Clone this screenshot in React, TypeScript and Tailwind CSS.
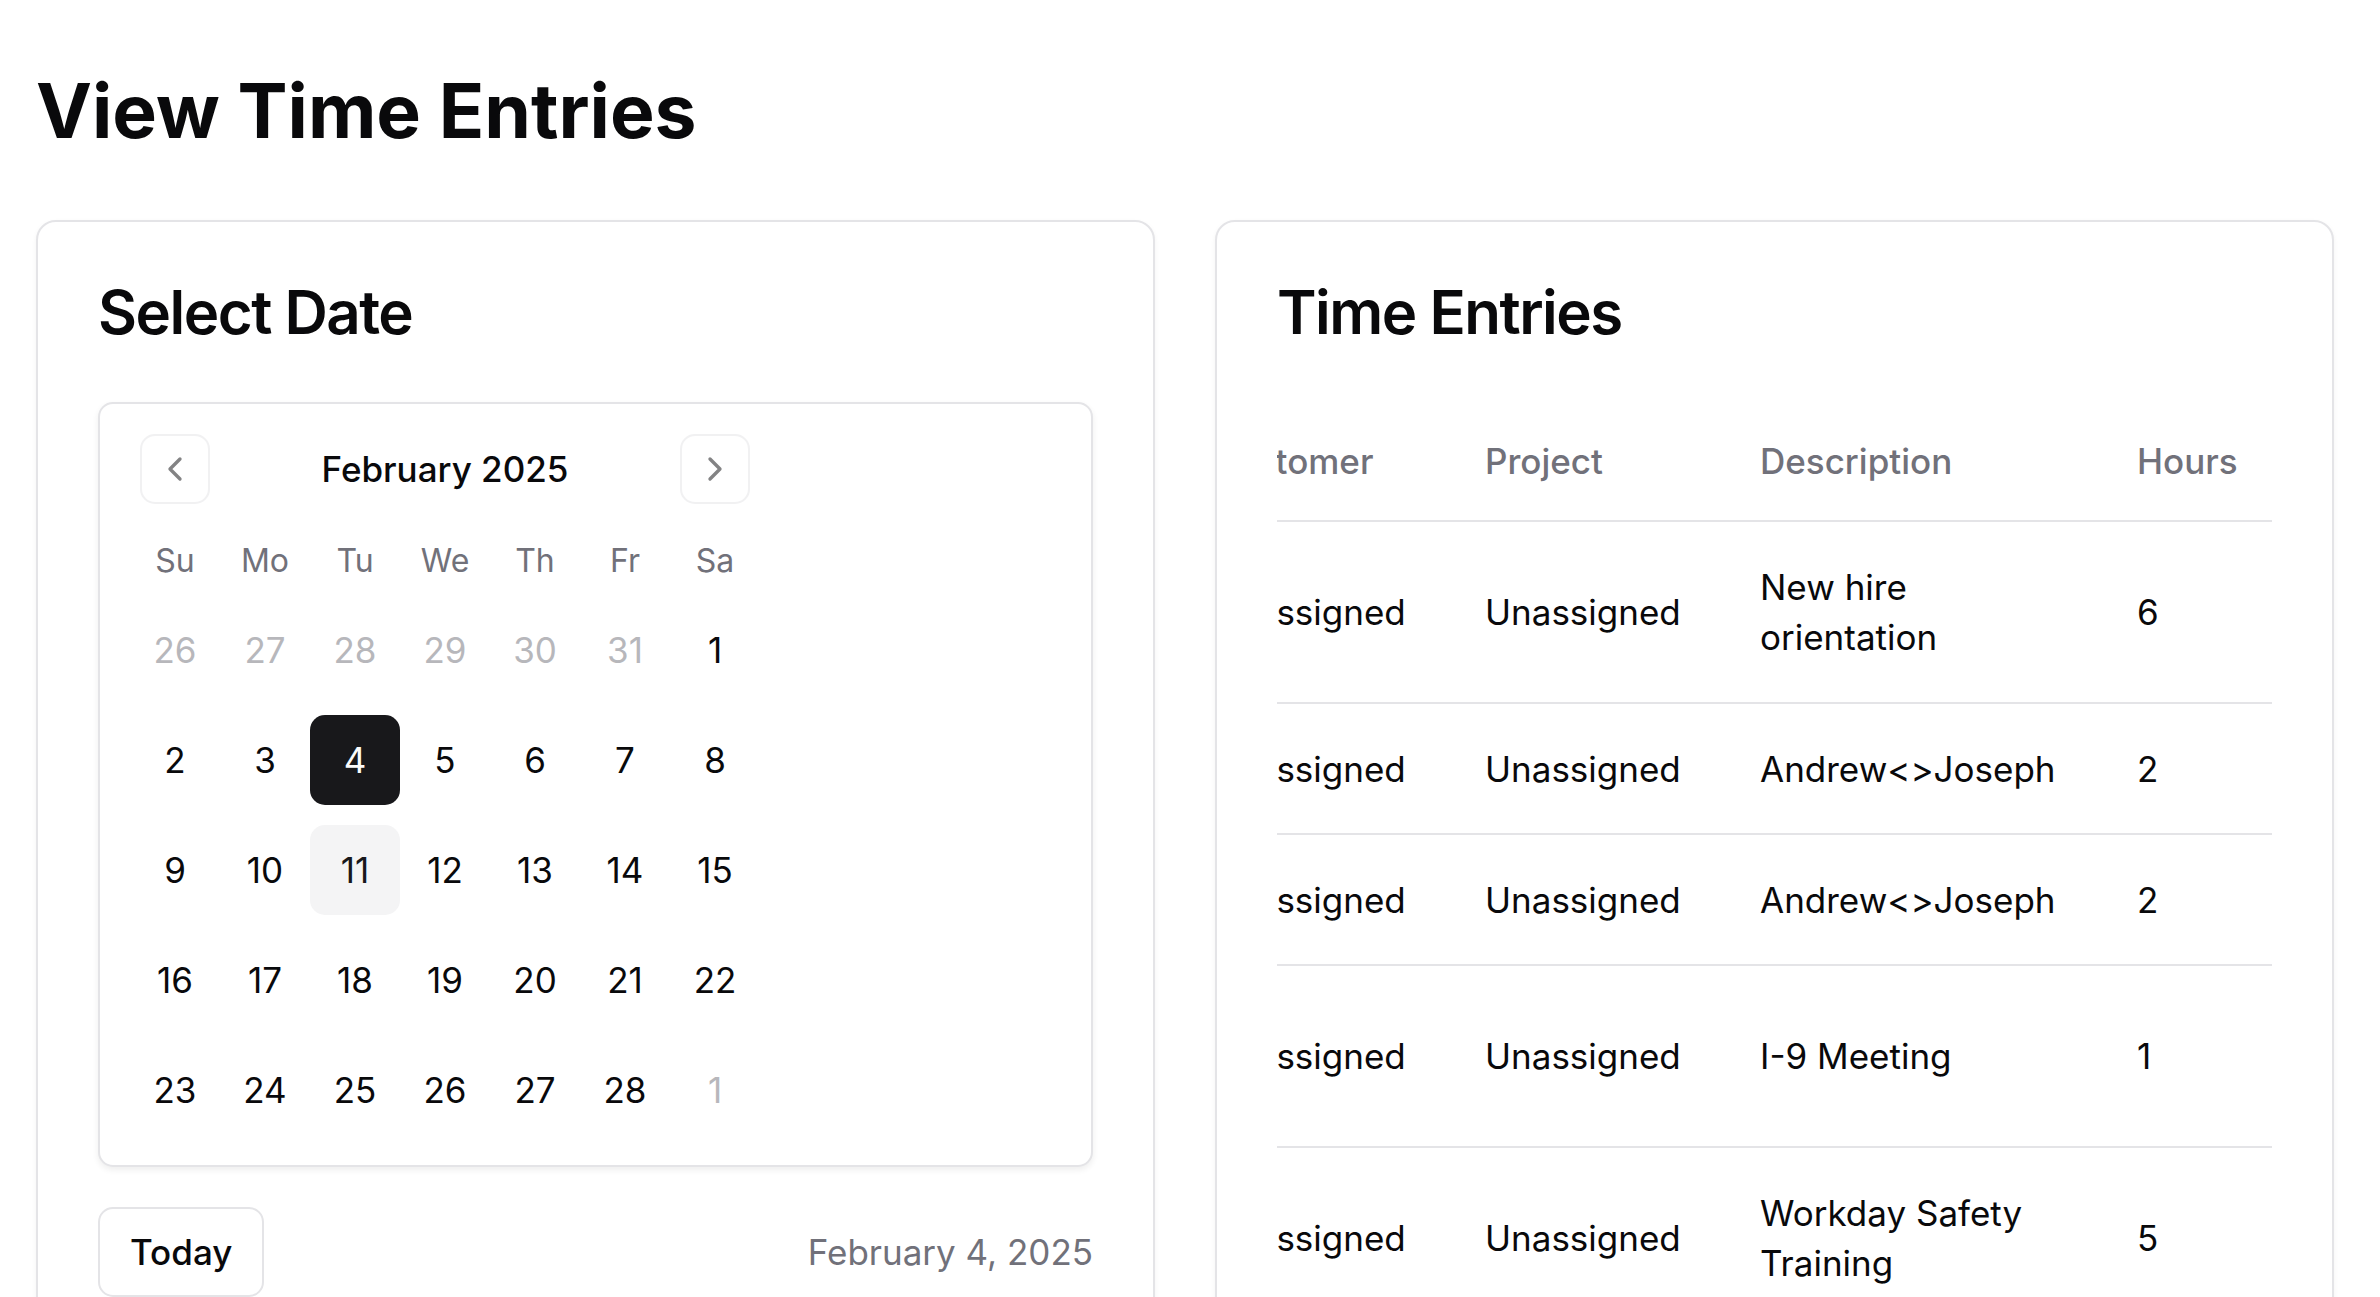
import { ChevronLeft, ChevronRight } from "lucide-react";

type Day = { d: number; out?: boolean };

const weeks: Day[][] = [
  [{ d: 26, out: true }, { d: 27, out: true }, { d: 28, out: true }, { d: 29, out: true }, { d: 30, out: true }, { d: 31, out: true }, { d: 1 }],
  [{ d: 2 }, { d: 3 }, { d: 4 }, { d: 5 }, { d: 6 }, { d: 7 }, { d: 8 }],
  [{ d: 9 }, { d: 10 }, { d: 11 }, { d: 12 }, { d: 13 }, { d: 14 }, { d: 15 }],
  [{ d: 16 }, { d: 17 }, { d: 18 }, { d: 19 }, { d: 20 }, { d: 21 }, { d: 22 }],
  [{ d: 23 }, { d: 24 }, { d: 25 }, { d: 26 }, { d: 27 }, { d: 28 }, { d: 1, out: true }],
];

const dayNames = ["Su", "Mo", "Tu", "We", "Th", "Fr", "Sa"];

type Entry = { date: string; customer: string; project: string; desc: string[]; hours: string; tall: boolean };

const entries: Entry[] = [
  { date: "2025-02-04", customer: "Unassigned", project: "Unassigned", desc: ["New hire", "orientation"], hours: "6", tall: true },
  { date: "2025-02-04", customer: "Unassigned", project: "Unassigned", desc: ["Andrew<>Joseph"], hours: "2", tall: false },
  { date: "2025-02-04", customer: "Unassigned", project: "Unassigned", desc: ["Andrew<>Joseph"], hours: "2", tall: false },
  { date: "2025-02-04", customer: "Unassigned", project: "Unassigned", desc: ["I-9 Meeting"], hours: "1", tall: true },
  { date: "2025-02-04", customer: "Unassigned", project: "Unassigned", desc: ["Workday Safety", "Training"], hours: "5", tall: true },
];

function Card({ title, children }: { title: string; children: React.ReactNode }) {
  return (
    <div className="rounded-[20px] border-2 border-[#e4e4e7] bg-white shadow-[0_2px_5px_0_rgba(0,0,0,0.05)]">
      <div className="p-[60px]">
        <h3 className="text-[60px] font-semibold leading-none tracking-[-1.5px]">{title}</h3>
      </div>
      <div className="px-[60px] pb-[60px]">{children}</div>
    </div>
  );
}

function Calendar() {
  return (
    <div className="w-full rounded-[15px] border-2 border-[#e4e4e7] bg-white p-[30px] shadow-[0_3px_6px_0_rgba(0,0,0,0.07)]">
      <div className="w-[630px]">
        <div className="relative flex items-center justify-center pt-[10px]">
          <button className="absolute left-[10px] top-0 flex h-[70px] w-[70px] items-center justify-center rounded-[15px] border-2 border-[#e4e4e7] text-[#09090b] opacity-50">
            <ChevronLeft size={40} strokeWidth={2} />
          </button>
          <div className="text-[35px] font-medium leading-[50px]">February 2025</div>
          <button className="absolute right-[10px] top-0 flex h-[70px] w-[70px] items-center justify-center rounded-[15px] border-2 border-[#e4e4e7] text-[#09090b] opacity-50">
            <ChevronRight size={40} strokeWidth={2} />
          </button>
        </div>
        <div className="mt-[43px] flex">
          {dayNames.map((n) => (
            <div key={n} className="w-[90px] text-center text-[32px] font-normal leading-[48px] text-[#71717a]">
              {n}
            </div>
          ))}
        </div>
        {weeks.map((w, i) => (
          <div key={i} className="mt-[20px] flex">
            {w.map((day, j) => {
              const selected = !day.out && day.d === 4;
              const today = !day.out && day.d === 11;
              let cls = "text-[#09090b]";
              if (day.out) cls = "text-[#71717a] opacity-50";
              if (selected) cls = "bg-[#18181b] text-[#fafafa]";
              if (today) cls = "bg-[#f4f4f5] text-[#18181b]";
              return (
                <div
                  key={j}
                  className={`flex h-[90px] w-[90px] items-center justify-center rounded-[15px] text-[35px] font-normal leading-[50px] ${cls}`}
                >
                  {day.d}
                </div>
              );
            })}
          </div>
        ))}
      </div>
    </div>
  );
}

function EntriesTable() {
  return (
    <div className="flex justify-end overflow-hidden">
      <table className="w-[1402px] shrink-0 table-fixed border-collapse text-[35px] leading-[50px]">
        <colgroup>
          <col className="w-[300px]" />
          <col className="w-[275px]" />
          <col className="w-[275px]" />
          <col className="w-[377px]" />
          <col className="w-[175px]" />
        </colgroup>
        <thead>
          <tr className="border-b-2 border-[#e4e4e7]">
            {["Date", "Customer", "Project", "Description", "Hours"].map((h) => (
              <th key={h} className="h-[119px] whitespace-nowrap px-[40px] text-left align-middle font-medium text-[#71717a]">
                {h}
              </th>
            ))}
          </tr>
        </thead>
        <tbody>
          {entries.map((e, i) => (
            <tr key={i} className={`border-b-2 border-[#e4e4e7] ${e.tall ? "h-[182px]" : "h-[131px]"}`}>
              <td className="whitespace-nowrap px-[40px] align-middle">{e.date}</td>
              <td className="whitespace-nowrap px-[40px] align-middle">{e.customer}</td>
              <td className="whitespace-nowrap px-[40px] align-middle">{e.project}</td>
              <td className="whitespace-nowrap px-[40px] align-middle">
                {e.desc.map((l, k) => (
                  <div key={k}>{l}</div>
                ))}
              </td>
              <td className="whitespace-nowrap px-[40px] align-middle">{e.hours}</td>
            </tr>
          ))}
        </tbody>
      </table>
    </div>
  );
}

export default function App() {
  return (
    <div className="h-[1297px] overflow-hidden bg-white font-['Inter',sans-serif] text-[#09090b]">
      <div className="pl-[36px] pt-[66px]">
        <h1 className="text-[75px] font-bold leading-[90px]">View Time Entries</h1>
        <div className="mt-[64px] grid w-[2298px] grid-cols-2 items-start gap-[60px]">
          <Card title="Select Date">
            <Calendar />
            <div className="mt-[40px] flex items-center justify-between">
              <button className="h-[90px] rounded-[15px] border-2 border-[#e4e4e7] bg-white px-[30px] text-[35px] font-medium leading-[50px] text-[#09090b]">
                Today
              </button>
              <div className="text-[35px] leading-[50px] text-[#71717a]">February 4, 2025</div>
            </div>
          </Card>
          <Card title="Time Entries">
            <EntriesTable />
          </Card>
        </div>
      </div>
    </div>
  );
}
